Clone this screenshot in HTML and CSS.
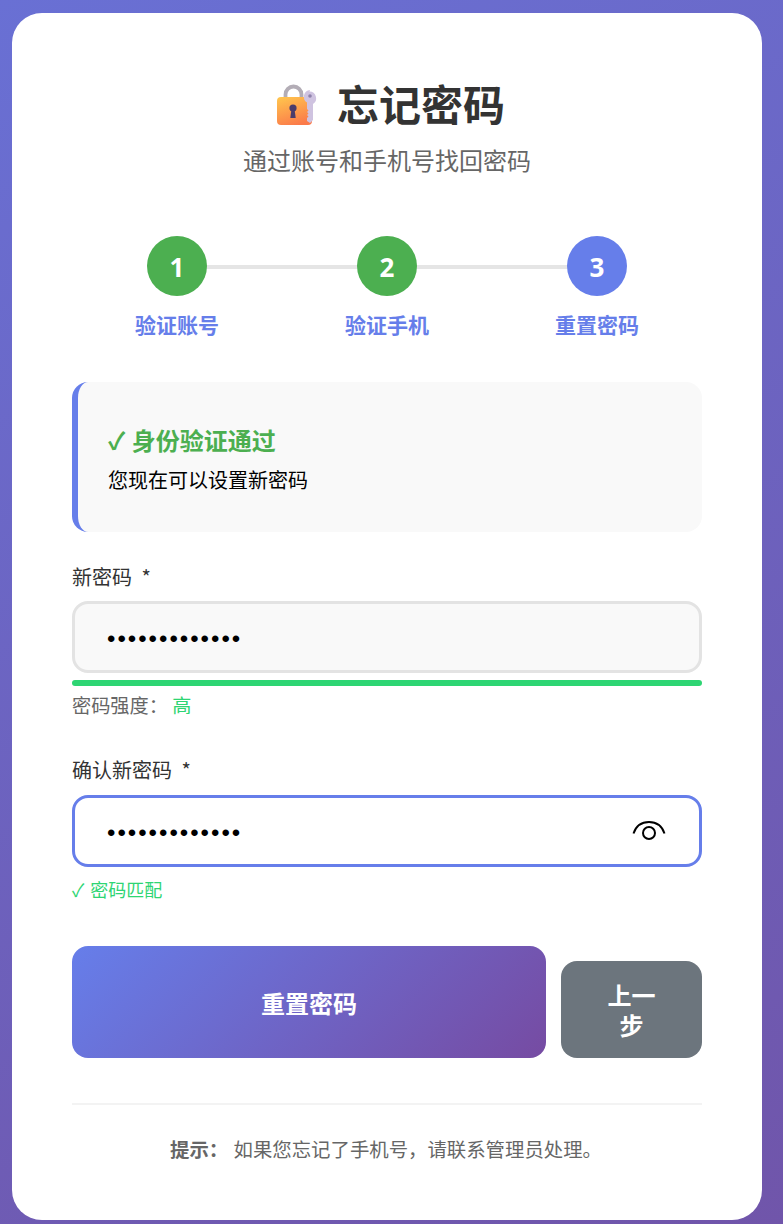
FILE: index.html
```html
<!DOCTYPE html>
<html lang="zh-CN">
<head>
    <meta charset="UTF-8">
    <meta name="viewport" content="width=device-width, initial-scale=1.0">
    <title>忘记密码</title>
    <link rel="stylesheet" href="styles.css">
</head>
<body>
<div class="card">
    <div class="header">
        <h1>
            <svg class="lock-icon" width="44" height="44" viewBox="0 0 44 44">
                <defs>
                    <linearGradient id="lockbody" x1="0.2" y1="0" x2="0.6" y2="1">
                        <stop offset="0" stop-color="#ffc24d"/>
                        <stop offset="1" stop-color="#fb7a4a"/>
                    </linearGradient>
                </defs>
                <path d="M10.500 16V11.500a8 8 0 0 1 16 0V16" fill="none" stroke="#b3adb6" stroke-width="3.800"/>
                <rect x="2" y="14" width="35" height="28" rx="4" fill="url(#lockbody)"/>
                <circle cx="18" cy="25" r="3.600" fill="#4a3c6b"/>
                <path d="M16.500 26h3l1.200 9h-5.400z" fill="#4a3c6b"/>
                <path d="M34.500 8.500a6.800 6.800 0 0 1 3.500 12.500V37l-3 3-3-2v-3l1.500-1.500-1.500-1.500 1.500-1.500-1.500-1.500 1.500-1.500-1.500-1.500v-6.500a6.800 6.800 0 0 1 3-12.500z" fill="#cfc3e0"/>
                <circle cx="35" cy="13" r="1.800" fill="#8f82ab"/>
            </svg>
            <span>忘记密码</span>
        </h1>
        <p class="subtitle">通过账号和手机号找回密码</p>
    </div>

    <div class="steps">
        <div class="step done"><div class="step-num">1</div><div class="step-label">验证账号</div></div>
        <div class="step done"><div class="step-num">2</div><div class="step-label">验证手机</div></div>
        <div class="step active"><div class="step-num">3</div><div class="step-label">重置密码</div></div>
    </div>

    <div class="info-box">
        <h3>✓ 身份验证通过</h3>
        <p>您现在可以设置新密码</p>
    </div>

    <div class="form-group first">
        <label for="pwd">新密码 *</label>
        <input type="password" id="pwd" value="Abcdef1234567">
        <div class="strength-bar"><div class="strength-fill"></div></div>
        <div class="strength-text">密码强度： <span class="good">高</span></div>
    </div>

    <div class="form-group second">
        <label for="pwd2">确认新密码 *</label>
        <div class="input-wrap">
            <input type="password" id="pwd2" class="focused" value="Abcdef1234567">
            <svg class="eye" width="34" height="26" viewBox="0 0 34 26">
                <path d="M1.500 16.500C4 9 10 5 17 5s13 4 15.500 11.500" fill="none" stroke="#000" stroke-width="2"/>
                <circle cx="17" cy="16" r="6" fill="none" stroke="#000" stroke-width="2"/>
            </svg>
        </div>
        <div class="match-text">✓ 密码匹配</div>
    </div>

    <div class="buttons">
        <button class="btn-primary">重置密码</button>
        <button class="btn-secondary">上一步</button>
    </div>

    <div class="footer">
        <strong>提示：</strong> 如果您忘记了手机号，请联系管理员处理。
    </div>
</div>
</body>
</html>
```

FILE: styles.css
```css
* {
    box-sizing: border-box;
    margin: 0;
    padding: 0;
}
html {
    height: 100%;
}
body {
    min-height: 1224px;
    padding: 13px 21px 4px 12px;
    background: linear-gradient(155deg, #6970d4 0%, #7055aa 100%);
    font-family: "Noto Sans CJK SC", "Noto Sans", sans-serif;
}
.card {
    height: 1207px;
    padding: 0 60px;
    background: #fff;
    border-radius: 30px;
    overflow: hidden;
}
.header {
    padding-top: 60px;
    text-align: center;
}
h1 {
    display: flex;
    justify-content: center;
    align-items: center;
    gap: 18px;
    height: 60px;
    padding-left: 6px;
    font-size: 42px;
    line-height: 60px;
    font-weight: 700;
    color: #333;
}
.lock-icon {
    margin-top: 4px;
}
.subtitle {
    margin-top: 10px;
    font-size: 24px;
    line-height: 34px;
    color: #666;
}
.steps {
    display: flex;
    position: relative;
    margin-top: 59px;
}
.steps::before {
    content: "";
    position: absolute;
    left: 105px;
    right: 105px;
    top: 29px;
    height: 4px;
    background: #e5e5e5;
}
.step {
    position: relative;
    flex: 1;
    display: flex;
    flex-direction: column;
    align-items: center;
}
.step-num {
    width: 60px;
    height: 60px;
    border-radius: 50%;
    color: #fff;
    font-family: "Open Sans", sans-serif;
    font-size: 26px;
    font-weight: 700;
    line-height: 62px;
    text-align: center;
}
.done .step-num {
    background: #4caf50;
}
.active .step-num {
    background: #667eea;
}
.step-label {
    margin-top: 13px;
    font-size: 21px;
    line-height: 30px;
    font-weight: 700;
    color: #667eea;
}
.info-box {
    margin-top: 43px;
    height: 150px;
    padding: 40px 30px 0;
    background: #f9f9f9;
    border-left: 6px solid #667eea;
    border-radius: 16px;
}
.info-box h3 {
    font-size: 24px;
    line-height: 36px;
    font-weight: 700;
    word-spacing: 1px;
    color: #4caf50;
}
.info-box p {
    margin-top: 7px;
    font-size: 20px;
    line-height: 30px;
    color: #000;
}
.form-group label {
    display: block;
    font-size: 20px;
    line-height: 30px;
    word-spacing: 5px;
    color: #333;
}
.first {
    margin-top: 30px;
}
.second {
    margin-top: 35px;
}
.form-group input {
    display: block;
    width: 100%;
    height: 72px;
    margin-top: 10px;
    padding: 4px 32px 0 32px;
    border: 3px solid #e3e3e3;
    border-radius: 16px;
    background: #f9f9f9;
    font-size: 24px;
    letter-spacing: 2px;
    font-family: "Liberation Sans", sans-serif;
    outline: none;
}
.first input {
    margin-top: 9px;
}
.form-group input.focused {
    background: #fff;
    border-color: #667eea;
}
.input-wrap {
    position: relative;
}
.eye {
    position: absolute;
    right: 36px;
    top: 22px;
}
.strength-bar {
    height: 6px;
    margin-top: 7px;
    border-radius: 3px;
    background: #e0e0e0;
    overflow: hidden;
}
.strength-fill {
    width: 100%;
    height: 100%;
    background: #2ed573;
}
.strength-text {
    margin-top: 4px;
    font-size: 19.2px;
    line-height: 30px;
    color: #666;
}
.good {
    color: #2ed573;
}
.match-text {
    margin-top: 9px;
    font-size: 18px;
    line-height: 27px;
    word-spacing: 2px;
    color: #2ed573;
}
.buttons {
    display: flex;
    align-items: flex-end;
    gap: 15px;
    margin-top: 43px;
}
.buttons button {
    border: none;
    border-radius: 16px;
    color: #fff;
    font-family: inherit;
    font-size: 24px;
    font-weight: 700;
}
.btn-primary {
    flex: 1;
    height: 112px;
    background: linear-gradient(135deg, #667eea 0%, #764ba2 100%);
}
.btn-secondary {
    width: 141px;
    height: 97px;
    padding: 0 40px;
    line-height: 30px;
    background: #6c757d;
}
.footer {
    margin-top: 45px;
    padding: 27px 2px 0 0;
    border-top: 2px solid #f3f3f3;
    font-size: 19.4px;
    line-height: 34px;
    text-align: center;
    color: #666;
}
.footer strong {
    margin-right: 1px;
}
```
